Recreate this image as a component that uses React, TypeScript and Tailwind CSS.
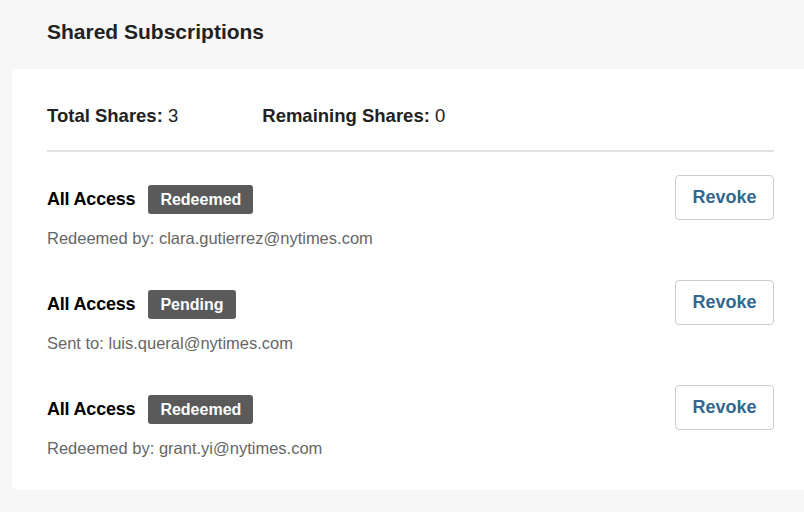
const shares = [
  { status: "Redeemed", label: "Redeemed by", email: "clara.gutierrez@nytimes.com" },
  { status: "Pending", label: "Sent to", email: "luis.queral@nytimes.com" },
  { status: "Redeemed", label: "Redeemed by", email: "grant.yi@nytimes.com" },
];

export default function App() {
  return (
    <div
      className="min-h-[512px] bg-[#f7f7f7] pt-[18px] pb-[23px] text-[#121212]"
      style={{ fontFamily: '"Liberation Sans", Arial, sans-serif' }}
    >
      <h1 className="pl-[47px] text-[21px] leading-[27px] font-bold text-[#222]">Shared Subscriptions</h1>

      <div className="mt-[24px] ml-3 rounded-l-[6px] bg-white pl-[35px] pr-[30px] pt-[34px] pb-[31px]">
        <div className="flex items-center gap-[84px] text-[18.5px] leading-[26px] text-[#222]">
          <p>
            <span className="font-bold">Total Shares:</span> 3
          </p>
          <p>
            <span className="font-bold">Remaining Shares:</span> 0
          </p>
        </div>

        <div className="mt-[21px] h-[2px] bg-[#e2e2e2]" />

        <ul className="mt-[22px] flex flex-col gap-[30px]">
          {shares.map((s, i) => (
            <li key={i} className="flex items-start justify-between">
              <div>
                <div className="mt-[11px] flex items-center gap-[13px]">
                  <span className="text-[18px] leading-[29px] font-bold tracking-[-0.2px] text-black">All Access</span>
                  <span className="rounded-[3px] bg-[#5a5a5a] px-[12px] text-[16px] leading-[29px] font-bold text-white">
                    {s.status}
                  </span>
                </div>
                <p className="mt-[13px] text-[16.5px] leading-[22px] text-[#666]">
                  {s.label}: {s.email}
                </p>
              </div>
              <button className="mt-[1px] h-[45px] w-[99px] rounded-[4px] border border-[#ccc] bg-white text-[18px] font-bold text-[#326891]">
                Revoke
              </button>
            </li>
          ))}
        </ul>
      </div>
    </div>
  );
}
